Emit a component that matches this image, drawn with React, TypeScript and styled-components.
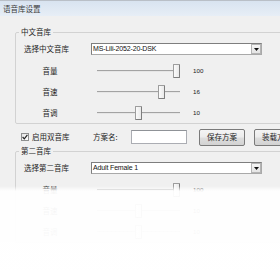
import React from "react";
import styled, { createGlobalStyle } from "styled-components";

const CJK = `"Noto Sans CJK SC", "Noto Sans CJK JP", sans-serif`;
const LATIN = `"Liberation Sans", Arial, sans-serif`;

const GlobalStyle = createGlobalStyle`
  html, body { margin: 0; padding: 0; background: #ffffff; }
  body { font-family: ${CJK}; }
  * { box-sizing: border-box; }
`;

const Window = styled.div`
  position: relative;
  width: 280px;
  height: 270px;
  overflow: hidden;
  background: #f0f0f0;
  color: #1e1e1e;
  font-family: ${CJK};
  font-size: 7.5px;
  line-height: 10px;
`;

const TitleBar = styled.div`
  height: 16px;
  border-top: 1px solid #b9bfc7;
  background: linear-gradient(#d8e3f0, #e7eef6);
  display: flex;
  align-items: center;
  padding-left: 3px;
  color: #3c3c3c;
`;

const Section = styled.div<{ $top: number }>`
  padding: ${(p) => p.$top}px 0 0 15px;
`;

const Group = styled.fieldset`
  margin: 0;
  padding: 0;
  width: 300px;
  min-inline-size: auto;
  border: 1px solid #d2d2d2;
  border-radius: 2px;
`;

const GroupTitle = styled.legend`
  padding: 0 2px;
  margin-left: 3px;
  height: 10px;
  line-height: 10px;
  color: #1e1e1e;
`;

const GroupContent = styled.div`
  padding-left: 8px;
`;

const SelectRow = styled.div`
  display: flex;
  align-items: center;
  height: 12px;
  margin-top: 6px;
  margin-bottom: 5px;
`;

const RowLabel = styled.div`
  width: 67px;
  white-space: nowrap;
`;

const Combo = styled.div`
  width: 171px;
  height: 12px;
  display: flex;
  align-items: center;
  background: #ffffff;
  border: 1px solid #a9a9a9;
  border-top-color: #7e7e7e;
  border-left-color: #7e7e7e;
`;

const ComboText = styled.div`
  flex: 1;
  padding-left: 1px;
  font-family: ${LATIN};
  font-size: 7px;
  letter-spacing: -0.15px;
  color: #111;
  white-space: nowrap;
  overflow: hidden;
`;

const DropButton = styled.div`
  width: 10px;
  height: 10px;
  display: flex;
  align-items: center;
  justify-content: center;
  background: linear-gradient(#f6f6f6, #e4e4e4);
  border: 1px solid #b4b4b4;
`;

const SliderRow = styled.div`
  display: flex;
  align-items: center;
  height: 21px;
`;

const SliderLabel = styled.div`
  width: 52px;
  text-align: center;
  white-space: nowrap;
`;

const TrackArea = styled.div`
  position: relative;
  width: 83px;
  height: 21px;
  margin-left: 21px;
  display: flex;
  align-items: center;
`;

const Channel = styled.div`
  width: 100%;
  height: 2px;
  border-top: 1px solid #a3a3a3;
  background: #e6e6e6;
`;

const Thumb = styled.div`
  position: absolute;
  top: 3.5px;
  width: 7px;
  height: 14px;
  background: linear-gradient(90deg, #fbfbfb, #e9e9e9);
  border: 1px solid #9d9d9d;
  border-right-color: #7d7d7d;
  border-bottom-color: #7d7d7d;
  border-radius: 1px;
`;

const SliderValue = styled.div`
  margin-left: 13px;
  font-family: ${LATIN};
  font-size: 6.2px;
  color: #1a1a1a;
`;

const OptionRow = styled.div`
  display: flex;
  align-items: center;
  height: 18px;
  margin-top: 4px;
  padding-left: 21px;
  & > * {
    flex-shrink: 0;
  }
`;

const CheckItem = styled.div`
  width: 72px;
  display: flex;
  align-items: center;
  gap: 3px;
  white-space: nowrap;
`;

const CheckBox = styled.div`
  width: 8px;
  height: 8px;
  display: flex;
  align-items: center;
  justify-content: center;
  border: 1px solid #8e8f8f;
  background: linear-gradient(135deg, #e4e4e4, #ffffff);
`;

const SchemeLabel = styled.div`
  width: 38px;
  white-space: nowrap;
`;

const TextInput = styled.div`
  width: 56px;
  height: 14px;
  background: #ffffff;
  border: 1px solid #abadb3;
  border-top-color: #8f9297;
`;

const PushButton = styled.div<{ $gap: number }>`
  width: 46px;
  height: 17px;
  margin-left: ${(p) => p.$gap}px;
  display: flex;
  align-items: center;
  justify-content: center;
  border: 1px solid #7a7a7a;
  border-radius: 2px;
  background: linear-gradient(#f4f4f4 0%, #ececec 48%, #dedede 52%, #d2d2d2 100%);
  white-space: nowrap;
  color: #1e1e1e;
`;

const Fade = styled.div`
  position: absolute;
  left: 0;
  right: 0;
  top: 186px;
  bottom: 0;
  background: linear-gradient(
    rgba(255, 255, 255, 0) 0px,
    rgba(255, 255, 255, 0.95) 5px,
    rgba(255, 255, 255, 0.975) 100%
  );
`;

type SliderProps = { label: string; value: number; max: number };

const Slider: React.FC<SliderProps> = ({ label, value, max }) => {
  const left = (value / max) * 76;
  return (
    <SliderRow>
      <SliderLabel>{label}</SliderLabel>
      <TrackArea>
        <Channel />
        <Thumb style={{ left: `${left}px` }} />
      </TrackArea>
      <SliderValue>{value}</SliderValue>
    </SliderRow>
  );
};

const ComboBox: React.FC<{ text: string }> = ({ text }) => (
  <Combo>
    <ComboText>{text}</ComboText>
    <DropButton>
      <svg width="5" height="3" viewBox="0 0 5 3">
        <path d="M0 0 H5 L2.5 3 Z" fill="#111" />
      </svg>
    </DropButton>
  </Combo>
);

export default function App() {
  return (
    <>
      <GlobalStyle />
      <Window>
        <TitleBar>语音库设置</TitleBar>
        <Section $top={11}>
          <Group>
            <GroupTitle>中文音库</GroupTitle>
            <GroupContent>
              <SelectRow>
                <RowLabel>选择中文音库</RowLabel>
                <ComboBox text="MS-Lili-2052-20-DSK" />
              </SelectRow>
              <Slider label="音量" value={100} max={100} />
              <Slider label="音速" value={16} max={20} />
              <Slider label="音调" value={10} max={20} />
            </GroupContent>
          </Group>
        </Section>
        <OptionRow>
          <CheckItem>
            <CheckBox>
              <svg width="6" height="6" viewBox="0 0 6 6">
                <path d="M0.6 3 L2.3 4.8 L5.4 0.8" fill="none" stroke="#222" strokeWidth="1.2" />
              </svg>
            </CheckBox>
            启用双音库
          </CheckItem>
          <SchemeLabel>方案名:</SchemeLabel>
          <TextInput />
          <PushButton $gap={12}>保存方案</PushButton>
          <PushButton $gap={9}>装载方案</PushButton>
        </OptionRow>
        <Section $top={0}>
          <Group>
            <GroupTitle>第二音库</GroupTitle>
            <GroupContent>
              <SelectRow>
                <RowLabel>选择第二音库</RowLabel>
                <ComboBox text="Adult Female 1" />
              </SelectRow>
              <Slider label="音量" value={100} max={100} />
              <Slider label="音速" value={10} max={20} />
              <Slider label="音调" value={10} max={20} />
            </GroupContent>
          </Group>
        </Section>
        <Fade />
      </Window>
    </>
  );
}
